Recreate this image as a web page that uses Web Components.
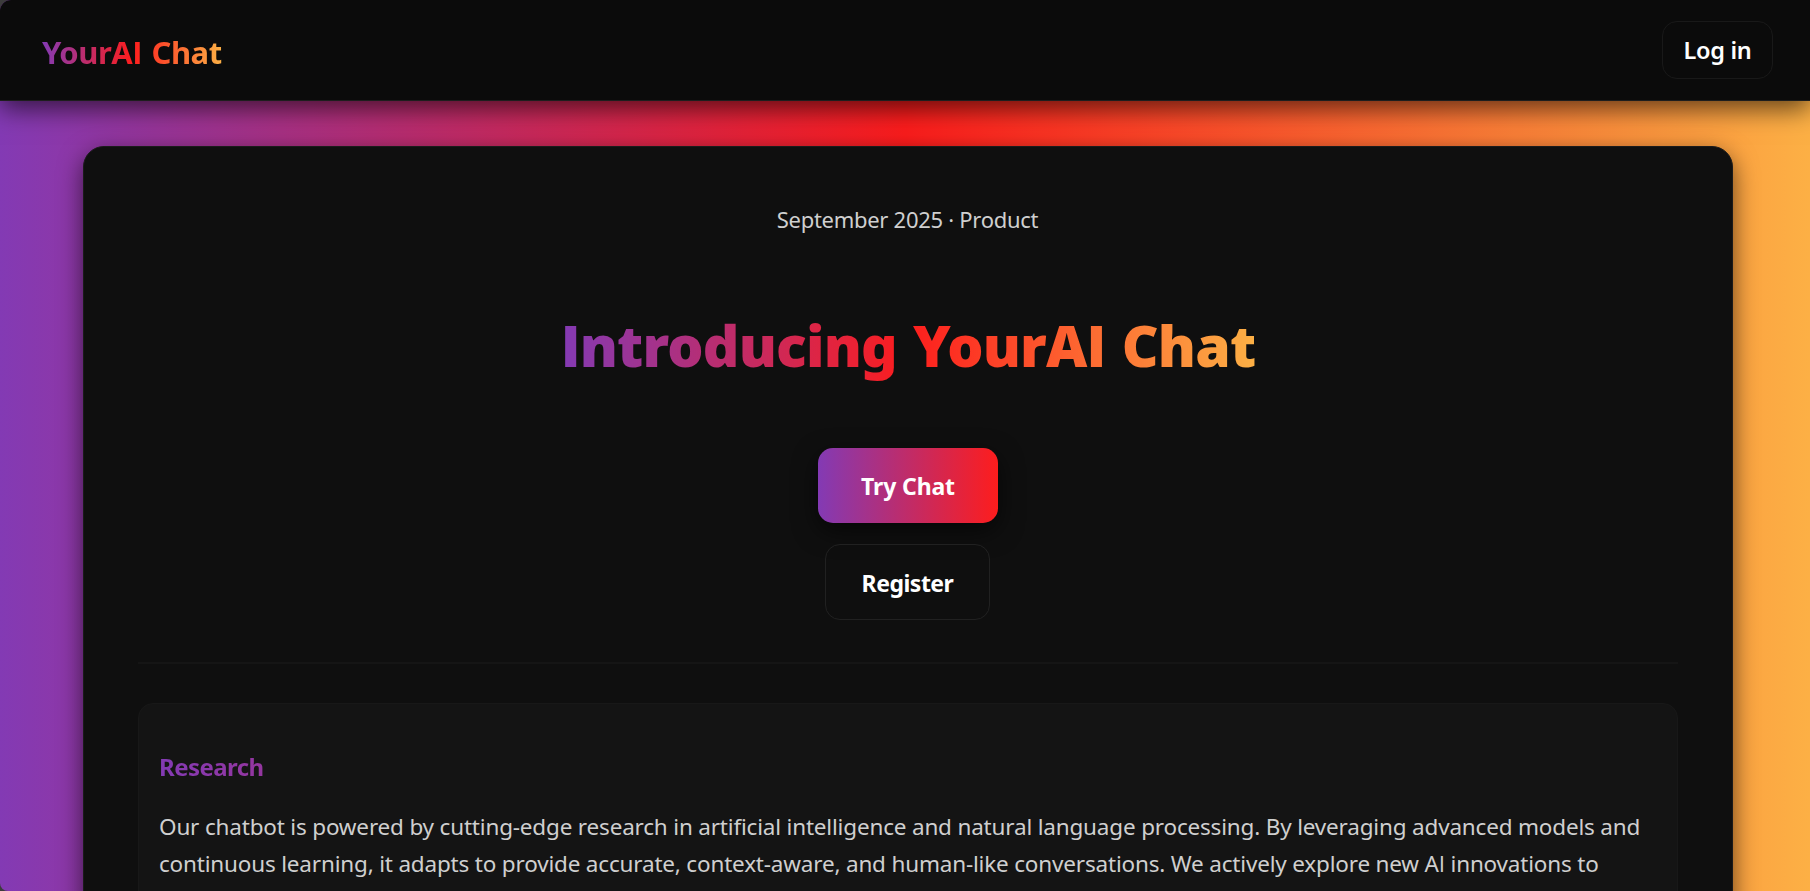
<!DOCTYPE html>
<html lang="en">
<head>
<meta charset="utf-8">
<title>YourAI Chat</title>
<style>
html,body{margin:0;height:100%;overflow:hidden;background:#3c3c3c}
body{font-family:"Noto Sans","Open Sans",sans-serif;color:#fff;--brand:linear-gradient(90deg,#833ab4,#fd1d1d,#fcb045)}
/* the capital I is set without serifs */
.i{font-family:"Open Sans",sans-serif}
</style>
</head>
<body>
<app-shell>
  <site-header slot="header">
    <gradient-text>YourA<span class="i">I</span> Chat</gradient-text>
    <action-button slot="action" variant="small">Log in</action-button>
  </site-header>
  <hero-card>
    <span slot="meta">September 2025 · Product</span>
    <gradient-text slot="title" large><span class="i">I</span>ntroducing YourA<span class="i">I</span> Chat</gradient-text>
    <action-button slot="actions" variant="primary">Try Chat</action-button>
    <action-button slot="actions">Register</action-button>
    <info-section heading="Research">
      <text-line>Our chatbot is powered by cutting-edge research in artificial intelligence and natural language processing. By leveraging advanced models and</text-line>
      <text-line>continuous learning, it adapts to provide accurate, context-aware, and human-like conversations. We actively explore new A<span class="i">I</span> innovations to</text-line>
    </info-section>
  </hero-card>
</app-shell>
<script>
const define = (name, html) => customElements.define(name, class extends HTMLElement {
  connectedCallback() {
    if (this.shadowRoot) return;
    const root = this.attachShadow({mode: 'open'});
    root.innerHTML = html;
    const title = root.querySelector('[data-heading]');
    if (title) title.textContent = this.getAttribute('heading');
  }
});

define('app-shell', `<style>
:host{display:flex;flex-direction:column;height:100vh;overflow:hidden;background:var(--brand);border-radius:11px 0 0 8px}
main{padding:45px 77px 0 83px}
</style><slot name="header"></slot><main><slot></slot></main>`);

define('site-header', `<style>
:host{display:flex;box-sizing:border-box;flex:none;height:101px;align-items:center;justify-content:space-between;padding:0 37px 0 42px;background:#0b0b0b;border-bottom:1px solid #1d1d1d;box-shadow:0 8px 24px rgba(0,0,0,.6)}
div{padding-top:4px}
</style><div><slot></slot></div><slot name="action"></slot>`);

define('gradient-text', `<style>
:host{display:block;width:max-content;font-weight:700;font-size:31px;line-height:40px;letter-spacing:-.5px;word-spacing:2px;background:var(--brand);-webkit-background-clip:text;background-clip:text;color:transparent}
:host([large]){font-weight:900;font-size:57px;line-height:78px;letter-spacing:-.8px;word-spacing:2px}
</style><slot></slot>`);

define('action-button', `<style>
:host{display:flex;box-sizing:border-box;align-items:center;justify-content:center;width:165px;height:76px;margin-right:1px;padding-top:2px;border:1px solid #212121;border-radius:15px;font-weight:700;font-size:23px;line-height:37px;letter-spacing:-.5px}
:host([variant=primary]){width:180px;height:75px;margin:0;padding:1px 0 0;border:0;letter-spacing:-.14px;background:linear-gradient(90deg,#833ab4,#fd1d1d);box-shadow:0 8px 24px rgba(0,0,0,.6)}
:host([variant=small]){width:111px;height:58px;margin:0;padding-top:1px;border-color:#191919;font-weight:600;font-size:23.5px;letter-spacing:-.3px}
</style><slot></slot>`);

define('hero-card', `<style>
:host{display:block;box-sizing:border-box;height:1200px;padding:54px 54px 0;background:#0f0f0f;border:1px solid #1b1b1b;border-radius:21px;box-shadow:0 8px 24px rgba(0,0,0,.6)}
header{display:flex;flex-direction:column;align-items:center;height:461px;border-bottom:2px solid #151515;margin-bottom:39px}
.meta{font-size:22px;line-height:37px;letter-spacing:-.28px;color:#cfcfcf;margin:0 1px 68px 0}
nav{display:flex;flex-direction:column;align-items:center;gap:21px;margin-top:64px}
</style><header><div class="meta"><slot name="meta"></slot></div><slot name="title"></slot><nav><slot name="actions"></slot></nav></header><slot></slot>`);

define('info-section', `<style>
:host{display:block;box-sizing:border-box;height:300px;padding:44px 20px;background:#141414;border:1px solid #181818;border-radius:15px}
h2{margin:0 0 23px;font-weight:700;font-size:24px;line-height:37px;letter-spacing:-.55px;background:var(--brand);-webkit-background-clip:text;background-clip:text;color:transparent}
</style><h2 data-heading></h2><slot></slot>`);

define('text-line', `<style>
:host{display:block;white-space:nowrap;font-size:22.5px;line-height:37px;letter-spacing:-.18px;color:#cfcfcf}
</style><slot></slot>`);
</script>
</body>
</html>
